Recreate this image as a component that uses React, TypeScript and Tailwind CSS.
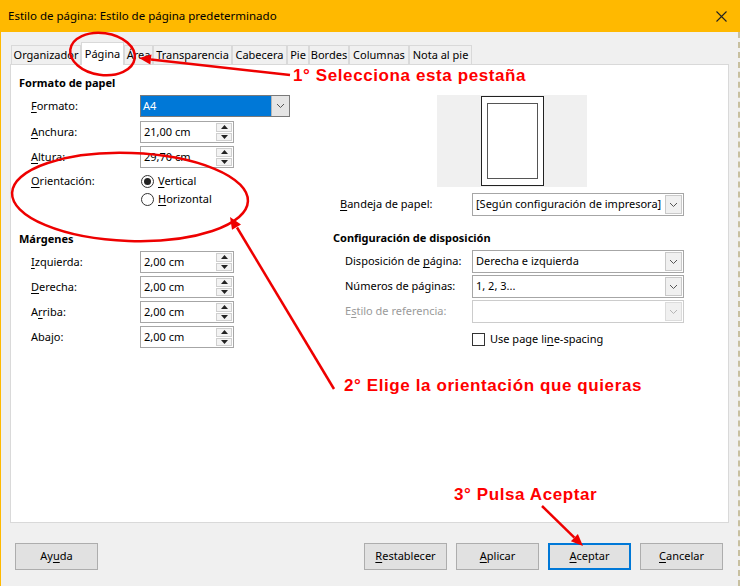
import type { ReactNode } from "react";

const ui = "font-['Noto_Sans',sans-serif] text-[11px] text-black";
const note =
  "pointer-events-none absolute font-['Liberation_Sans',sans-serif] text-[17px] font-bold leading-[16px] tracking-[0.6px] text-[#ff0000] whitespace-nowrap";

function U({ children }: { children: ReactNode }) {
  return <span className="underline underline-offset-2">{children}</span>;
}

function Chevron({ color = "#555" }: { color?: string }) {
  return (
    <svg width="9" height="6" viewBox="0 0 9 6">
      <path d="M1 1 L4.5 4.5 L8 1" fill="none" stroke={color} strokeWidth="1" />
    </svg>
  );
}

function Spin({ value }: { value: string }) {
  return (
    <div className="flex h-[22px] w-[94px] border border-[#a6a6a6] bg-white">
      <div className="flex flex-1 items-center pl-[3px]">{value}</div>
      <div className="my-[1px] mr-[1px] flex w-[16px] flex-col gap-[1px]">
        <div className="flex flex-1 items-center justify-center border border-[#cfcfcf] bg-[#f3f3f3]">
          <svg width="7" height="4" viewBox="0 0 7 4">
            <path d="M0 4 L3.5 0 L7 4 Z" fill="#222" />
          </svg>
        </div>
        <div className="flex flex-1 items-center justify-center border border-[#cfcfcf] bg-[#f3f3f3]">
          <svg width="7" height="4" viewBox="0 0 7 4">
            <path d="M0 0 L3.5 4 L7 0 Z" fill="#222" />
          </svg>
        </div>
      </div>
    </div>
  );
}

function Combo({ value, disabled = false }: { value?: string; disabled?: boolean }) {
  return (
    <div
      className={
        disabled
          ? "flex h-[23px] w-[212px] border border-[#cccccc] bg-white"
          : "flex h-[23px] w-[212px] border border-[#a6a6a6] bg-white"
      }
    >
      <div className="flex flex-1 items-center overflow-hidden whitespace-nowrap pl-[3px]">{value}</div>
      <div
        className={
          disabled
            ? "my-[1px] mr-[1px] flex w-[17px] items-center justify-center border border-[#dcdcdc] bg-[#f0f0f0]"
            : "my-[1px] mr-[1px] flex w-[17px] items-center justify-center border border-[#c9c9c9] bg-[#f0f0f0]"
        }
      >
        <Chevron color={disabled ? "#b5b5b5" : "#555"} />
      </div>
    </div>
  );
}

function FieldRow({ label, children, top }: { label: ReactNode; children: ReactNode; top: string }) {
  return (
    <div className={`flex items-center ${top}`}>
      <div className="box-content w-[109px] pl-[12px]">{label}</div>
      {children}
    </div>
  );
}

function Radio({ checked, label }: { checked?: boolean; label: ReactNode }) {
  return (
    <div className="flex h-[16px] items-center gap-[4px]">
      <div className="flex h-[13px] w-[13px] items-center justify-center rounded-full border border-[#333] bg-white">
        {checked && <div className="h-[7px] w-[7px] rounded-full bg-[#222]" />}
      </div>
      <span>{label}</span>
    </div>
  );
}

function Tab({ label, w, active }: { label: string; w: string; active?: boolean }) {
  if (active) {
    return (
      <div
        className={`relative z-10 -mb-px flex h-[23px] ${w} items-center justify-center border border-b-0 border-[#d9d9d9] bg-white`}
      >
        {label}
      </div>
    );
  }
  return (
    <div className={`flex h-[19px] ${w} items-center justify-center border border-b-0 border-[#d9d9d9] bg-[#f0f0f0]`}>
      {label}
    </div>
  );
}

function Button({ children, primary }: { children: ReactNode; primary?: boolean }) {
  return (
    <div
      className={
        primary
          ? "flex h-[27px] w-[83px] items-center justify-center border-2 border-[#0078d7] bg-[#e1e1e1]"
          : "flex h-[27px] w-[83px] items-center justify-center border border-[#adadad] bg-[#e1e1e1]"
      }
    >
      {children}
    </div>
  );
}

export default function App() {
  return (
    <div className={`relative flex h-[586px] w-[740px] flex-col overflow-hidden bg-[#f0f0f0] ${ui}`}>
      {/* title bar */}
      <div className="flex h-[32px] items-center justify-between bg-[#ffb900] pl-[8px] pr-[13px]">
        <span className="text-[11.5px]">Estilo de página: Estilo de página predeterminado</span>
        <svg width="11" height="11" viewBox="0 0 11 11">
          <path d="M0.5 0.5 L10.5 10.5 M10.5 0.5 L0.5 10.5" stroke="#222" strokeWidth="1.1" />
        </svg>
      </div>

      <div className="flex flex-1 flex-col border-l border-r-2 border-dashed border-l-[#ffb900] border-r-[#c8c0a0] [border-left-style:solid]">
        {/* tabs */}
        <div className="flex items-end pl-[10px] pt-[10px]">
          <Tab label="Organizador" w="w-[70px]" />
          <Tab label="Página" w="w-[43px]" active />
          <Tab label="Área" w="w-[29px]" />
          <Tab label="Transparencia" w="w-[79px]" />
          <Tab label="Cabecera" w="w-[55px]" />
          <Tab label="Pie" w="w-[22px]" />
          <Tab label="Bordes" w="w-[40px]" />
          <Tab label="Columnas" w="w-[60px]" />
          <Tab label="Nota al pie" w="w-[63px]" />
        </div>

        {/* panel */}
        <div className="ml-[9px] flex h-[459px] w-[719px] border border-[#d9d9d9] bg-white">
          {/* left column */}
          <div className="flex w-[322px] flex-col pl-[8px] pt-[11px]">
            <div className="h-[14px] font-bold leading-[14px]">Formato de papel</div>

            <FieldRow top="mt-[5px]" label={<><U>F</U>ormato:</>}>
              <div className="flex h-[22px] w-[150px] border border-[#7a7a7a] bg-white">
                <div className="flex flex-1 items-center bg-[#0078d7] pl-[2px] text-white">A4</div>
                <div className="flex w-[18px] items-center justify-center border-l border-[#b5b5b5] bg-[#e5e5e5]">
                  <Chevron />
                </div>
              </div>
            </FieldRow>
            <FieldRow top="mt-[4px]" label={<><U>A</U>nchura:</>}>
              <Spin value="21,00 cm" />
            </FieldRow>
            <FieldRow top="mt-[3px]" label={<><U>A</U>ltura:</>}>
              <Spin value="29,70 cm" />
            </FieldRow>

            <div className="mt-[5px] flex">
              <div className="box-content w-[109px] pl-[12px] leading-[16px]">
                <U>O</U>rientación:
              </div>
              <div className="flex flex-col gap-[2px] pl-[1px]">
                <Radio checked label={<><U>V</U>ertical</>} />
                <Radio label={<><U>H</U>orizontal</>} />
              </div>
            </div>

            <div className="mt-[25px] h-[14px] font-bold leading-[14px]">Márgenes</div>
            <FieldRow top="mt-[5px]" label={<><U>I</U>zquierda:</>}>
              <Spin value="2,00 cm" />
            </FieldRow>
            <FieldRow top="mt-[3px]" label={<><U>D</U>erecha:</>}>
              <Spin value="2,00 cm" />
            </FieldRow>
            <FieldRow top="mt-[3px]" label={<>A<U>r</U>riba:</>}>
              <Spin value="2,00 cm" />
            </FieldRow>
            <FieldRow top="mt-[3px]" label={<>Abajo:</>}>
              <Spin value="2,00 cm" />
            </FieldRow>
          </div>

          {/* right column */}
          <div className="flex flex-1 flex-col pt-[30px]">
            <div className="ml-[104px] flex h-[92px] w-[150px] items-center justify-center bg-[#f0f0f0]">
              <div className="flex h-[90px] w-[63px] items-center justify-center border border-[#222] bg-white">
                <div className="h-[76px] w-[51px] border-[1.5px] border-[#555] bg-white" />
              </div>
            </div>

            <div className="mt-[6px] flex items-center">
              <div className="box-content w-[132px] pl-[7px]">
                <U>B</U>andeja de papel:
              </div>
              <Combo value="[Según configuración de impresora]" />
            </div>

            <div className="mt-[15px] h-[14px] font-bold leading-[14px]">Configuración de disposición</div>

            <div className="mt-[5px] flex items-center">
              <div className="box-content w-[127px] pl-[12px]">
                Disposición de <U>p</U>ágina:
              </div>
              <Combo value="Derecha e izquierda" />
            </div>
            <div className="mt-[2px] flex items-center">
              <div className="box-content w-[127px] pl-[12px]">Números de páginas:</div>
              <Combo value="1, 2, 3..." />
            </div>
            <div className="mt-[2px] flex items-center">
              <div className="box-content w-[127px] pl-[12px] text-[#9a9a9a]">
                E<U>s</U>tilo de referencia:
              </div>
              <Combo disabled />
            </div>
            <div className="mt-[8px] flex items-center gap-[5px] pl-[139px]">
              <div className="h-[13px] w-[13px] border border-[#333] bg-white" />
              <span>
                Use page li<U>n</U>e-spacing
              </span>
            </div>
          </div>
        </div>

        {/* buttons */}
        <div className="mt-[20px] flex items-center pl-[14px] pr-[15px]">
          <Button>
            Ay<U>u</U>da
          </Button>
          <div className="ml-auto flex gap-[9px]">
            <Button>
              <U>R</U>establecer
            </Button>
            <Button>
              <U>A</U>plicar
            </Button>
            <Button primary>
              <U>A</U>ceptar
            </Button>
            <Button>
              <U>C</U>ancelar
            </Button>
          </div>
        </div>
      </div>

      {/* annotations overlay */}
      <svg className="pointer-events-none absolute left-0 top-0" width="740" height="586" viewBox="0 0 740 586">
        <ellipse cx="102.5" cy="54" rx="32.5" ry="21" fill="none" stroke="#ee0000" strokeWidth="2.5" transform="rotate(8 102.5 54)" />
        <ellipse cx="130" cy="197" rx="118" ry="44" fill="none" stroke="#ee0000" strokeWidth="2.5" transform="rotate(2 130 197)" />
        <line x1="290" y1="75" x2="151" y2="59.4" stroke="#ee0000" strokeWidth="2.5" />
        <polygon points="139,58 151.5,54.5 150.3,64.4" fill="#ee0000" />
        <line x1="334" y1="389" x2="237" y2="227.5" stroke="#ee0000" strokeWidth="2.5" />
        <polygon points="230,217 241,224.5 232,229.8" fill="#ee0000" />
        <line x1="542" y1="506" x2="574.4" y2="537.6" stroke="#ee0000" strokeWidth="2.5" />
        <polygon points="583,546 570.9,541.2 577.9,534" fill="#ee0000" />
      </svg>
      <span className={`${note} left-[293px] top-[68px]`}>1° Selecciona esta pestaña</span>
      <span className={`${note} left-[344px] top-[378px]`}>2° Elige la orientación que quieras</span>
      <span className={`${note} left-[454px] top-[487px]`}>3° Pulsa Aceptar</span>
    </div>
  );
}
